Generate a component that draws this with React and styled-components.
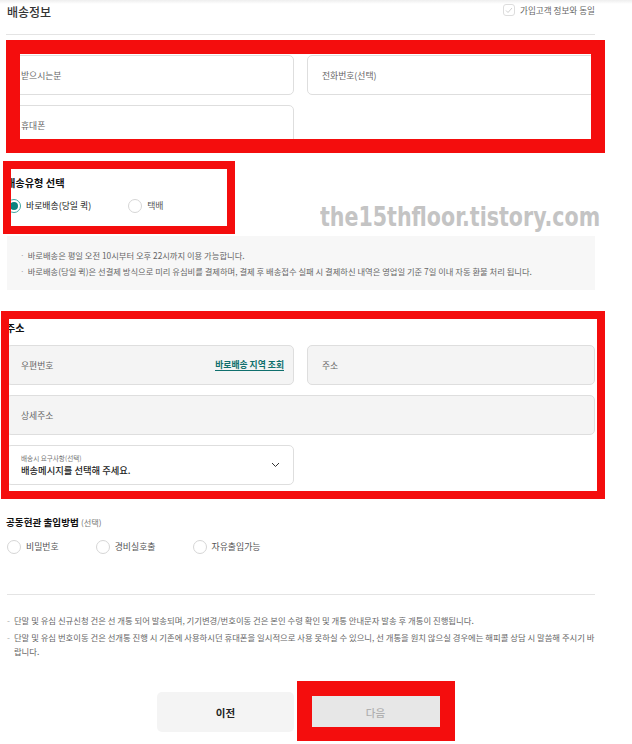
import React from 'react'
import styled, { createGlobalStyle } from 'styled-components'

const GlobalStyle = createGlobalStyle`
  body {
    margin: 0;
    background: #fff;
    font-family: "Noto Sans CJK KR", "Noto Sans", sans-serif;
  }
`;

const Page = styled.div`
  position: relative;
  width: 632px;
  height: 744px;
  overflow: hidden;
  background: linear-gradient(#eeeeee, #ffffff 4px);
`;

const Content = styled.div`
  width: 589px;
  padding-left: 6px;
`;

const Header = styled.div`
  display: flex;
  justify-content: space-between;
  align-items: flex-start;
  height: 34px;
  border-bottom: 1px solid #e4e4e4;
`;

const PageTitle = styled.h2`
  margin: 5px 0 0 1px;
  font-size: 12px;
  line-height: 14px;
  font-weight: 500;
  color: #333;
`;

const SameAs = styled.label`
  display: flex;
  align-items: center;
  gap: 5px;
  margin-top: 4px;
  font-size: 8.6px;
  line-height: 12px;
  color: #666;
`;

const CheckBox = styled.span`
  display: flex;
  align-items: center;
  justify-content: center;
  width: 10px;
  height: 10px;
  border: 1px solid #dddddd;
  border-radius: 3px;
`;

const FieldGrid = styled.div`
  display: grid;
  grid-template-columns: 1fr 1fr;
  gap: 10px 13px;
  margin-top: ${({ $top }) => $top}px;
`;

const Field = styled.div`
  grid-column: ${({ $wide }) => ($wide ? '1 / span 2' : 'auto')};
  display: flex;
  align-items: center;
  justify-content: space-between;
  box-sizing: border-box;
  height: 40px;
  padding: 0 13px 0 14px;
  border: 1px solid #dedede;
  border-radius: 5px;
  background: ${({ $gray }) => ($gray ? '#f4f4f4' : '#fff')};
  font-size: 8.8px;
  color: #666;
`;

const LinkText = styled.span`
  margin-right: -4px;
  font-weight: 700;
  color: #0f6f6d;
  border-bottom: 1px solid #0f6f6d;
  line-height: 11px;
`;

const SelectText = styled.div`
  display: flex;
  flex-direction: column;
  gap: 1px;
`;

const SelectLabel = styled.span`
  font-size: 6.6px;
  line-height: 9px;
  color: #777;
`;

const SelectValue = styled.span`
  font-size: 9.3px;
  line-height: 13px;
  font-weight: 500;
  color: #222;
`;

const SectionTitle = styled.h3`
  margin: ${({ $top }) => $top}px 0 0;
  font-size: ${({ $size }) => $size}px;
  line-height: 14px;
  font-weight: 700;
  color: #111;
`;

const Optional = styled.span`
  font-size: 8.2px;
  font-weight: 400;
  color: #777;
`;

const RadioRow = styled.div`
  display: flex;
  gap: 37px;
  margin-top: ${({ $top }) => $top}px;
  padding-left: 1px;
`;

const RadioItem = styled.label`
  display: flex;
  align-items: center;
  gap: 5px;
  font-size: 8.9px;
  line-height: 14px;
  color: ${({ $on }) => ($on ? '#222' : '#555')};
`;

const Circle = styled.span`
  display: flex;
  align-items: center;
  justify-content: center;
  box-sizing: border-box;
  width: 14px;
  height: 14px;
  border-radius: 50%;
  border: 1px solid ${({ $on }) => ($on ? '#3aa6a2' : '#d6d6d6')};
  &::after {
    content: '';
    display: ${({ $on }) => ($on ? 'block' : 'none')};
    width: 8px;
    height: 8px;
    border-radius: 50%;
    background: #0b837f;
  }
`;

const InfoBox = styled.ul`
  margin: 23px 0 0 1px;
  padding: 11px 13px;
  list-style: none;
  background: #f7f7f7;
`;

const Bullet = styled.li`
  display: flex;
  gap: 3px;
  font-size: 8.3px;
  line-height: 16px;
  color: #666;
  &::before {
    content: '·';
    color: #aaa;
  }
`;

const Divider = styled.hr`
  margin: ${({ $top }) => $top}px 0 0 1px;
  border: 0;
  border-top: 1px solid #e4e4e4;
`;

const Notes = styled.ul`
  display: flex;
  flex-direction: column;
  gap: 3px;
  margin: 18px 0 0 1px;
  padding: 0;
  list-style: none;
`;

const Note = styled.li`
  display: flex;
  gap: 4px;
  font-size: 8.35px;
  line-height: 14px;
  color: #666;
  &::before {
    content: '-';
    color: #aaa;
  }
`;

const Buttons = styled.div`
  display: flex;
  justify-content: center;
  gap: 13px;
  margin-top: 34px;
`;

const Button = styled.button`
  width: 137px;
  height: 40px;
  border: 0;
  border-radius: 5px;
  font-family: inherit;
  font-size: 10.5px;
  font-weight: ${({ $primary }) => ($primary ? 500 : 700)};
  background: ${({ $primary }) => ($primary ? '#e7e7e7' : '#f4f4f4')};
  color: ${({ $primary }) => ($primary ? '#b0b0b0' : '#222')};
`;

const Mark = styled.div`
  position: absolute;
  box-sizing: border-box;
  border: solid #f40d0d;
  pointer-events: none;
`;

const Watermark = styled.div`
  position: absolute;
  left: 320px;
  top: 202px;
  font-family: "DejaVu Sans Condensed", "DejaVu Sans", sans-serif;
  font-weight: 700;
  font-size: 26px;
  line-height: 30px;
  color: #c4c4c4;
  white-space: nowrap;
  transform: scaleX(0.88);
  transform-origin: left center;
`;

const marks = [
  { left: 6, top: 40, width: 599, height: 113, border: '14px' },
  { left: 3, top: 161, width: 232, height: 73, border: '8px' },
  { left: 1, top: 311, width: 604, height: 188, border: '8px' },
  { left: 297, top: 681, width: 158, height: 60, border: '15px 15px 14px' },
];

function Radio({ on, children }) {
  return (
    <RadioItem $on={on}>
      <Circle $on={on} />
      {children}
    </RadioItem>
  );
}

function App() {
  return (
    <Page>
      <GlobalStyle />
      <Content>
        <Header>
          <PageTitle>배송정보</PageTitle>
          <SameAs>
            <CheckBox>
              <svg width="8" height="7" viewBox="0 0 8 7">
                <polyline points="1,3.5 3,5.5 7,1" fill="none" stroke="#cfcfcf" strokeWidth="1" />
              </svg>
            </CheckBox>
            가입고객 정보와 동일
          </SameAs>
        </Header>

        <FieldGrid $top={20}>
          <Field>받으시는분</Field>
          <Field>전화번호(선택)</Field>
          <Field>휴대폰</Field>
        </FieldGrid>

        <SectionTitle $top={31} $size={10.2}>배송유형 선택</SectionTitle>
        <RadioRow $top={9}>
          <Radio on>바로배송(당일 퀵)</Radio>
          <Radio>택배</Radio>
        </RadioRow>

        <InfoBox>
          <Bullet>바로배송은 평일 오전 10시부터 오후 22시까지 이용 가능합니다.</Bullet>
          <Bullet>바로배송(당일 퀵)은 선결제 방식으로 미리 유심비를 결제하며, 결제 후 배송접수 실패 시 결제하신 내역은 영업일 기준 7일 이내 자동 환불 처리 됩니다.</Bullet>
        </InfoBox>

        <SectionTitle $top={31} $size={10}>주소</SectionTitle>
        <FieldGrid $top={10}>
          <Field $gray>
            우편번호
            <LinkText>바로배송 지역 조회</LinkText>
          </Field>
          <Field $gray>주소</Field>
          <Field $gray $wide>상세주소</Field>
          <Field>
            <SelectText>
              <SelectLabel>배송시 요구사항(선택)</SelectLabel>
              <SelectValue>배송메시지를 선택해 주세요.</SelectValue>
            </SelectText>
            <svg width="9" height="6" viewBox="0 0 9 6">
              <polyline points="1,1 4.5,4.5 8,1" fill="none" stroke="#333" strokeWidth="1" />
            </svg>
          </Field>
        </FieldGrid>

        <SectionTitle $top={30} $size={9.6}>
          공동현관 출입방법 <Optional>(선택)</Optional>
        </SectionTitle>
        <RadioRow $top={11}>
          <Radio>비밀번호</Radio>
          <Radio>경비실호출</Radio>
          <Radio>자유출입가능</Radio>
        </RadioRow>

        <Divider $top={40} />

        <Notes>
          <Note>단말 및 유심 신규신청 건은 선 개통 되어 발송되며, 기기변경/번호이동 건은 본인 수령 확인 및 개통 안내문자 발송 후 개통이 진행됩니다.</Note>
          <Note>단말 및 유심 번호이동 건은 선개통 진행 시 기존에 사용하시던 휴대폰을 일시적으로 사용 못하실 수 있으니, 선 개통을 원치 않으실 경우에는 해피콜 상담 시 말씀해 주시기 바랍니다.</Note>
        </Notes>

        <Buttons>
          <Button>이전</Button>
          <Button $primary>다음</Button>
        </Buttons>
      </Content>

      <Watermark>the15thfloor.tistory.com</Watermark>
      {marks.map((m, i) => (
        <Mark
          key={i}
          style={{ left: m.left, top: m.top, width: m.width, height: m.height, borderWidth: m.border }}
        />
      ))}
    </Page>
  );
}

export default App
